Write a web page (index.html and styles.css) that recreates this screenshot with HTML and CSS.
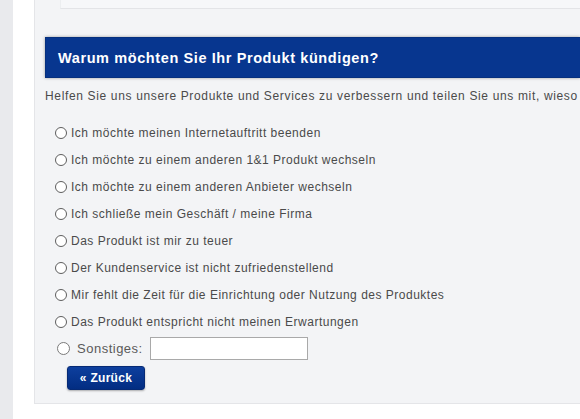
FILE: index.html
```html
<!DOCTYPE html>
<html lang="de">
<head>
<meta charset="utf-8">
<title>Kündigung</title>
<link rel="stylesheet" href="styles.css">
</head>
<body>
<div class="page">
  <div class="sidebar"></div>
  <div class="gutter"></div>
  <div class="panel">
    <div class="topbox"></div>
    <h2 class="header">Warum möchten Sie Ihr Produkt kündigen?</h2>
    <p class="intro">Helfen Sie uns unsere Produkte und Services zu verbessern und teilen Sie uns mit, wieso Sie Ihr Produkt kündigen möchten.</p>
    <form class="reasons">
      <label class="row"><input type="radio" name="r" class="radio"><span>Ich möchte meinen Internetauftritt beenden</span></label>
      <label class="row"><input type="radio" name="r" class="radio"><span>Ich möchte zu einem anderen 1&amp;1 Produkt wechseln</span></label>
      <label class="row"><input type="radio" name="r" class="radio"><span>Ich möchte zu einem anderen Anbieter wechseln</span></label>
      <label class="row"><input type="radio" name="r" class="radio"><span>Ich schließe mein Geschäft / meine Firma</span></label>
      <label class="row"><input type="radio" name="r" class="radio"><span>Das Produkt ist mir zu teuer</span></label>
      <label class="row"><input type="radio" name="r" class="radio"><span>Der Kundenservice ist nicht zufriedenstellend</span></label>
      <label class="row"><input type="radio" name="r" class="radio"><span>Mir fehlt die Zeit für die Einrichtung oder Nutzung des Produktes</span></label>
      <label class="row"><input type="radio" name="r" class="radio"><span>Das Produkt entspricht nicht meinen Erwartungen</span></label>
      <div class="row other"><input type="radio" name="r" class="radio"><span class="other-label">Sonstiges:</span><input type="text" class="other-input"></div>
      <div class="actions"><button type="button" class="btn">« Zurück</button></div>
    </form>
  </div>
</div>
</body>
</html>
```

FILE: styles.css
```css
html, body {
  margin: 0;
  padding: 0;
  background: #ffffff;
}
body {
  font-family: "Liberation Sans", Arial, sans-serif;
  font-size: 12px;
  color: #4a4a4a;
  width: 580px;
  height: 419px;
  overflow: hidden;
}
.page {
  display: flex;
  align-items: flex-start;
  height: 419px;
}
.sidebar {
  width: 13px;
  height: 419px;
  flex: none;
  background: #e9eaed;
}
.gutter {
  width: 21px;
  flex: none;
}
.panel {
  flex: 1;
  min-width: 0;
  background: #f3f4f6;
  border-left: 1px solid #e4e5e8;
  border-bottom: 1px solid #e4e5e8;
  padding: 0 0 13px 10px;
  overflow: hidden;
}
.topbox {
  margin-left: 15px;
  height: 8px;
  background: #f6f7f9;
  border-bottom: 1px solid #e3e4e7;
  border-left: 1px solid #eceef0;
}
.header {
  margin: 28px 0 0 0;
  height: 41px;
  box-sizing: border-box;
  background: #07368f;
  border: 1px solid #06307e;
  border-right: none;
  box-shadow: 0 0 3px rgba(0, 0, 0, 0.35);
  color: #ffffff;
  font-size: 14.5px;
  font-weight: bold;
  line-height: 41px;
  padding-left: 12px;
  white-space: nowrap;
  letter-spacing: 0.6px;
}
.intro {
  margin: 11px 0 0 0;
  line-height: 14px;
  white-space: nowrap;
  font-size: 12px;
  letter-spacing: 0.65px;
  color: #4a4a4a;
}
.reasons {
  margin: 16px 0 0 10px;
  display: flex;
  flex-direction: column;
}
.row {
  display: flex;
  align-items: center;
  height: 27px;
  white-space: nowrap;
  font-size: 12px;
  letter-spacing: 0.5px;
}
.radio {
  appearance: none;
  -webkit-appearance: none;
  margin: 0 4px 0 0;
  width: 12px;
  height: 12px;
  border: 1px solid #5e5e5e;
  border-radius: 50%;
  background: #ffffff;
  box-sizing: border-box;
  flex: none;
}
.other .radio {
  margin-left: 2px;
  margin-right: 7px;
  width: 13px;
  height: 13px;
  border-color: #7a7a7a;
}
.other-label {
  margin-right: 7px;
  font-size: 13px;
  letter-spacing: 0.5px;
  color: #5a5a5a;
}
.other-input {
  width: 158px;
  height: 23px;
  box-sizing: border-box;
  border: 1px solid #a9a9a9;
  background: #ffffff;
  margin: 0;
  padding: 0 3px;
}
.actions {
  margin-top: 4px;
  padding-left: 12px;
  display: flex;
}
.btn {
  width: 78px;
  height: 24px;
  border: 1px solid #062a75;
  border-radius: 3px;
  background: linear-gradient(#0d3f9e, #022d82);
  color: #ffffff;
  font-family: "Liberation Sans", Arial, sans-serif;
  font-weight: bold;
  font-size: 12px;
  letter-spacing: 0.3px;
  padding: 0;
  box-shadow: 0 1px 2px rgba(0, 0, 0, 0.3);
}
```
